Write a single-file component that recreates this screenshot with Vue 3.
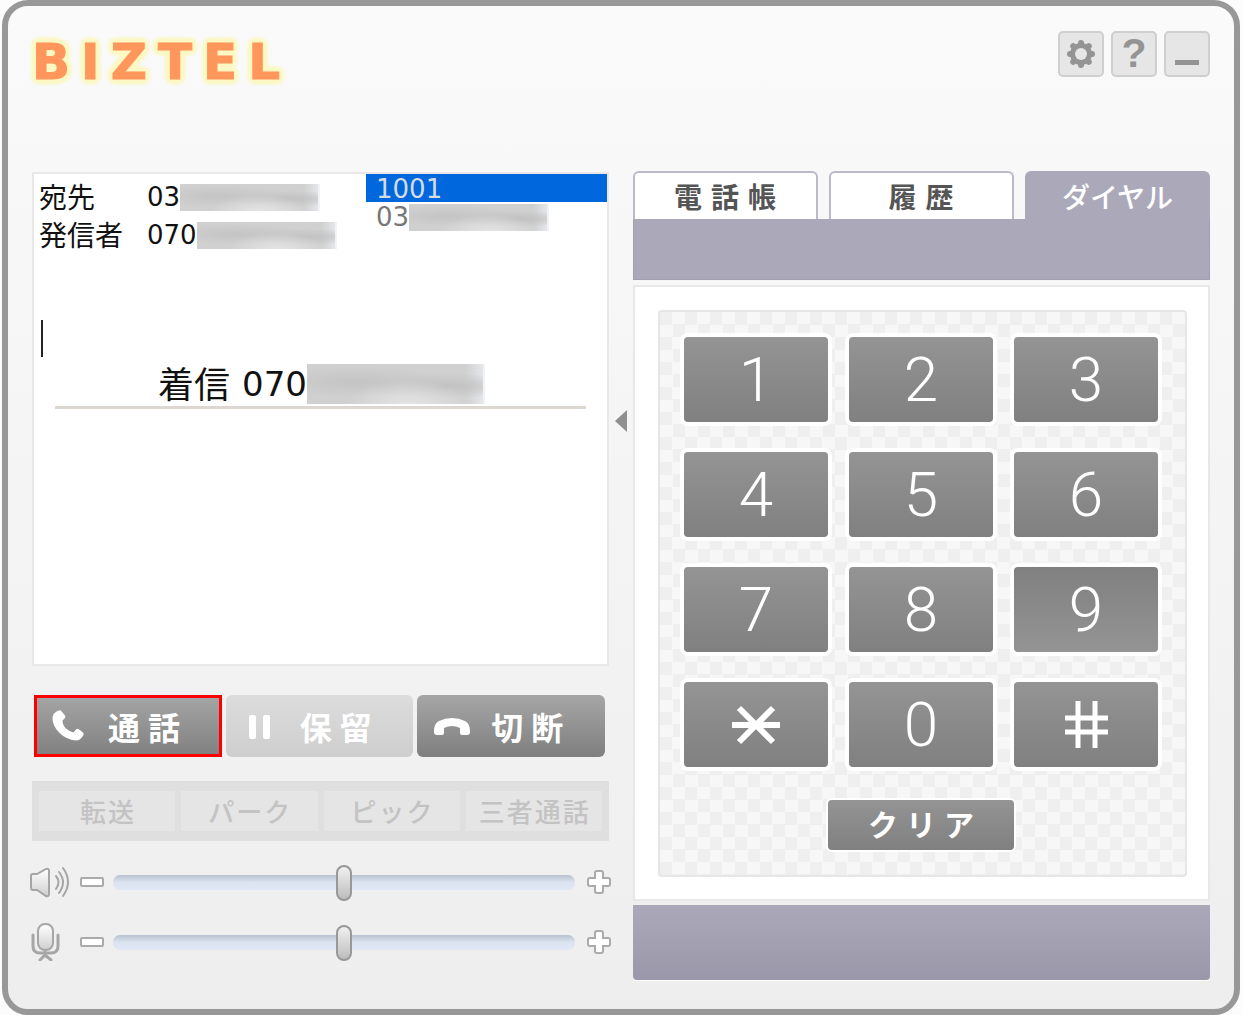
<script setup>
import { ref } from 'vue'

const tabs = [
  { id: 'book', label: '電話帳' },
  { id: 'history', label: '履歴' },
  { id: 'dial', label: 'ダイヤル' }
]
const activeTab = ref('dial')
const keys = ['1', '2', '3', '4', '5', '6', '7', '8', '9', '*', '0', '#']
const pressed = ref('9')
const tools = ['転送', 'パーク', 'ピック', '三者通話']
const entry = ref('')
const speaker = ref(50)
const mic = ref(50)
</script>

<template>
  <div class="phone">
    <header class="top">
      <h1 class="logo">BIZTEL</h1>
      <div class="window-buttons">
        <button type="button" aria-label="設定">
          <svg width="30" height="30" viewBox="0 0 30 30">
            <g fill="#949494">
              <rect v-for="a in [0, 45, 90, 135]" :key="a" x="12" y="1" width="6" height="28" rx="3" :transform="`rotate(${a} 15 15)`" />
              <circle cx="15" cy="15" r="11" />
            </g>
            <circle cx="15" cy="15" r="6" fill="#e6e6e6" />
          </svg>
        </button>
        <button type="button" class="help">?</button>
        <button type="button" aria-label="最小化">
          <svg width="30" height="30" viewBox="0 0 30 30"><rect x="3" y="21" width="24" height="5" fill="#949494" /></svg>
        </button>
      </div>
    </header>

    <main class="columns">
      <section class="left">
        <div class="display">
          <div class="call-info">
            <dl>
              <dt>宛先</dt>
              <dd>03<span class="masked"></span></dd>
              <dt>発信者</dt>
              <dd>070<span class="masked"></span></dd>
            </dl>
            <ul>
              <li class="selected">1001</li>
              <li>03<span class="masked"></span></li>
            </ul>
          </div>
          <div class="entry">
            <span class="caret"></span>
            <input v-model="entry" type="text" aria-label="番号入力" />
          </div>
          <div class="status">
            <span class="state">着信</span>
            <span>070</span><span class="masked large"></span>
          </div>
        </div>

        <div class="actions">
          <button type="button" class="action highlighted">
            <svg width="38" height="36" viewBox="0 0 38 36">
              <path d="M6.500 3.500 L9 2.500 Q10.500 2 11.500 3.200 L15 7.500 Q15.800 8.800 15 10 L12.500 12.500 Q12.500 17 16 20.500 Q19.500 23.500 23.500 24.500 L26 21.500 Q27 20.500 28.500 21 L33 24.500 Q34.200 25.800 33.400 27.300 L31 30.500 Q29 32.500 26 32.500 Q16.500 31.800 9.500 25 Q2 17.500 2.500 9 Q3.500 5 6.500 3.500 Z" fill="#fff" />
            </svg>
            <span>通話</span>
          </button>
          <button type="button" class="action" disabled>
            <svg width="38" height="36" viewBox="0 0 38 36" fill="#fff">
              <rect x="7" y="7" width="7" height="24" rx="2" />
              <rect x="21" y="7" width="7" height="24" rx="2" />
            </svg>
            <span>保留</span>
          </button>
          <button type="button" class="action">
            <svg width="38" height="36" viewBox="0 0 38 36">
              <path d="M1 24 Q0.500 16 6 13 Q12 10 19 10 Q26 10 32 13 Q37.500 16 37 24 Q37 27 34 27 L29 27 Q27 27 27 25 L27 20 Q23 18 19 18 Q15 18 11 20 L11 25 Q11 27 9 27 L4 27 Q1 27 1 24 Z" fill="#fff" />
            </svg>
            <span>切断</span>
          </button>
        </div>

        <div class="tools">
          <button v-for="t in tools" :key="t" type="button" disabled>{{ t }}</button>
        </div>

        <div class="sliders">
          <div class="slider">
            <svg width="42" height="36" viewBox="0 0 42 36" fill="none" stroke="#a6a6a6" stroke-width="2" stroke-linecap="round">
              <defs>
                <linearGradient id="metal" x1="0" y1="0" x2="0" y2="1">
                  <stop offset="0" stop-color="#fff" />
                  <stop offset="1" stop-color="#cfcfcf" />
                </linearGradient>
              </defs>
              <path d="M3 10 Q1 10 1 12 L1 24 Q1 26 3 26 L7 26 L16 32 Q19 33 19 30 L19 7 Q19 4 16 5 L7 10 Z" fill="url(#metal)" />
              <path d="M26 12 Q31 18 26 25 M29 8 Q37 18 29 29 M33 4 Q43 18 33 32" />
            </svg>
            <button type="button" aria-label="音量を下げる">
              <svg width="24" height="24" viewBox="0 0 24 24"><rect x="1" y="8" width="22" height="8" rx="1" fill="#fff" stroke="#aaa" stroke-width="2" /></svg>
            </button>
            <input v-model="speaker" type="range" min="0" max="100" aria-label="スピーカー音量" />
            <button type="button" class="plus" aria-label="音量を上げる">
              <svg width="24" height="24" viewBox="0 0 24 24"><path d="M10 1 H14 Q16 1 16 3 V8 H21 Q23 8 23 10 V14 Q23 16 21 16 H16 V21 Q16 23 14 23 H10 Q8 23 8 21 V16 H3 Q1 16 1 14 V10 Q1 8 3 8 H8 V3 Q8 1 10 1 Z" fill="#fff" stroke="#aaa" stroke-width="2" /></svg>
            </button>
          </div>
          <div class="slider">
            <svg width="42" height="38" viewBox="0 0 42 38" fill="none" stroke="#a6a6a6" stroke-width="2" stroke-linecap="round">
              <path d="M3 12 V23 Q3 30 10 30 H21 Q28 30 28 23 V12" stroke-width="3" />
              <rect x="8" y="1" width="15" height="26" rx="7" fill="url(#metal)" />
              <path d="M15 29 V33 M10 37 L15 32 L21 37" stroke-width="3" />
            </svg>
            <button type="button" aria-label="マイクを下げる">
              <svg width="24" height="24" viewBox="0 0 24 24"><rect x="1" y="8" width="22" height="8" rx="1" fill="#fff" stroke="#aaa" stroke-width="2" /></svg>
            </button>
            <input v-model="mic" type="range" min="0" max="100" aria-label="マイク音量" />
            <button type="button" class="plus" aria-label="マイクを上げる">
              <svg width="24" height="24" viewBox="0 0 24 24"><path d="M10 1 H14 Q16 1 16 3 V8 H21 Q23 8 23 10 V14 Q23 16 21 16 H16 V21 Q16 23 14 23 H10 Q8 23 8 21 V16 H3 Q1 16 1 14 V10 Q1 8 3 8 H8 V3 Q8 1 10 1 Z" fill="#fff" stroke="#aaa" stroke-width="2" /></svg>
            </button>
          </div>
        </div>
      </section>

      <div class="divider">
        <button type="button" aria-label="パネルを閉じる">
          <svg width="14" height="24" viewBox="0 0 14 24"><path d="M1 12 L13 1 V23 Z" fill="#8f8f8f" /></svg>
        </button>
      </div>

      <section class="right">
        <nav class="tabs">
          <button
            v-for="t in tabs"
            :key="t.id"
            type="button"
            :class="{ active: activeTab === t.id, spaced: t.id !== 'dial' }"
            @click="activeTab = t.id"
          >{{ t.label }}</button>
        </nav>
        <div class="band"></div>
        <div class="pad-frame">
          <div class="pad">
            <div class="keys">
              <button v-for="k in keys" :key="k" type="button" :class="{ pressed: pressed === k }" :aria-label="k" @click="pressed = k">
                <svg v-if="k === '*'" width="48" height="48" viewBox="0 0 48 48" stroke="#fff" stroke-width="6">
                  <path d="M0 24 H48 M7 7 L41 41 M41 7 L7 41" />
                </svg>
                <svg v-else-if="k === '#'" width="48" height="48" viewBox="0 0 48 48" stroke="#fff" stroke-width="5">
                  <path d="M3 17 H46 M3 31 H46 M16 0 V47 M33 0 V47" />
                </svg>
                <template v-else>{{ k }}</template>
              </button>
            </div>
            <button type="button" class="clear">クリア</button>
          </div>
        </div>
        <div class="footer-band"></div>
      </section>
    </main>
  </div>
</template>

<style>
body {
  background: #fcfcfc;
}
</style>

<style scoped>
.phone,
.phone * {
  box-sizing: border-box;
}

.phone {
  min-height: 100vh;
  margin: 0 2px;
  padding: 0 24px 29px;
  border: 6px solid #989898;
  border-radius: 26px;
  background: linear-gradient(#fafafa, #eeeeee);
  font-family: "DejaVu Sans", "Noto Sans CJK JP", sans-serif;
  color: #111;
}

button {
  display: flex;
  align-items: center;
  justify-content: center;
  margin: 0;
  padding: 0;
  border: 0;
  background: none;
  font-family: "Noto Sans CJK JP", sans-serif;
}

svg {
  display: block;
  flex: none;
}

.top {
  display: flex;
  justify-content: space-between;
  align-items: flex-start;
  height: 165px;
  padding-top: 25px;
}

.logo {
  margin: 3px 0 0;
  font-size: 50px;
  line-height: 56px;
  font-weight: 700;
  letter-spacing: 11px;
  color: #ff965c;
  -webkit-text-stroke: 1px #ff965c;
  text-shadow:
    5px 0 3px #fbf8c4, -5px 0 3px #fbf8c4, 0 5px 3px #fbf8c4, 0 -5px 3px #fbf8c4,
    4px 4px 3px #fbf8c4, -4px -4px 3px #fbf8c4, 4px -4px 3px #fbf8c4, -4px 4px 3px #fbf8c4;
}

.window-buttons {
  display: flex;
  gap: 7px;
}

.window-buttons button {
  width: 46px;
  height: 46px;
  border: 2px solid #cfcfcf;
  border-radius: 5px;
  background: #e6e6e6;
}

.window-buttons .help {
  padding-bottom: 2px;
  font-family: "Liberation Sans", sans-serif;
  font-size: 41px;
  line-height: 40px;
  font-weight: 700;
  color: #949494;
}

.columns {
  display: grid;
  grid-template-columns: 1fr 24px 1fr;
}

.left {
  min-width: 0;
  padding-top: 1px;
}

.display {
  height: 494px;
  border: 2px solid #e8e8e8;
  background: #fff;
}

.call-info {
  display: flex;
  justify-content: space-between;
  height: 146px;
}

dl {
  display: grid;
  grid-template-columns: 108px 1fr;
  grid-auto-rows: 38px;
  align-items: center;
  margin: 0;
  padding: 4px 0 0 5px;
}

dt {
  padding-bottom: 2px;
  font-family: "Noto Sans CJK JP", sans-serif;
  font-size: 28px;
  line-height: 36px;
}

dd {
  display: flex;
  align-items: center;
  margin: 0;
  font-size: 26px;
  line-height: 38px;
}

.masked {
  width: 140px;
  height: 27px;
  border-right: 2px solid #f0f2f4;
  background:
    radial-gradient(ellipse at 58% 110%, #e6e6e6, transparent 45%),
    radial-gradient(ellipse at 28% 45%, #c4c4c4, transparent 50%),
    radial-gradient(ellipse at 80% 55%, #c2c2c2, transparent 40%),
    linear-gradient(90deg, #d0d0d0, #d0d0d0 90%, #e4e6ea);
}

.masked.large {
  width: 178px;
  height: 40px;
}

ul {
  width: 241px;
  margin: 0;
  padding: 0;
  list-style: none;
}

li {
  display: flex;
  align-items: center;
  height: 28px;
  padding: 2px 0 0 10px;
  font-size: 26px;
  line-height: 26px;
  color: #777;
}

li.selected {
  background: #0068dc;
  color: #d6dce4;
}

.entry {
  display: flex;
  height: 37px;
  padding-left: 7px;
}

.caret {
  width: 2px;
  background: #222;
}

.entry input {
  flex: 1;
  min-width: 0;
  padding: 0;
  border: 0;
  outline: 0;
  background: none;
  font-size: 28px;
}

.status {
  display: flex;
  align-items: center;
  margin: 7px 21px 0;
  height: 45px;
  padding: 0 0 2px 103px;
  border-bottom: 3px solid #dcd8d1;
  font-size: 34px;
  line-height: 40px;
}

.state {
  margin-right: 12px;
  padding-bottom: 4px;
  font-family: "Noto Sans CJK JP", sans-serif;
  font-size: 36px;
}

.actions {
  display: grid;
  grid-template-columns: repeat(3, 1fr);
  gap: 4px;
  margin-top: 29px;
  padding: 0 4px 0 2px;
}

.action {
  justify-content: flex-start;
  gap: 20px;
  height: 62px;
  padding-left: 16px;
  border-radius: 6px;
  background: linear-gradient(#a6a6a6, #7f7f7f);
  font-size: 32px;
  line-height: 40px;
  font-weight: 700;
  letter-spacing: 8px;
  color: #fff;
}

.action:disabled {
  background: linear-gradient(#dcdcdc, #cecece);
}

.action.highlighted {
  border-radius: 0;
  outline: 3px solid #f00;
  outline-offset: -3px;
}

.tools {
  display: grid;
  grid-template-columns: repeat(4, 1fr);
  gap: 6px;
  margin-top: 24px;
  padding: 10px 7px;
  background: #dfdfdf;
}

.tools button {
  height: 40px;
  padding-left: 2px;
  background: #e5e5e5;
  font-size: 26px;
  line-height: 40px;
  font-weight: 500;
  letter-spacing: 2px;
  color: #c3c3c3;
}

.sliders {
  display: grid;
  gap: 24px;
  margin: 23px -2px 0;
}

.slider {
  display: flex;
  align-items: center;
  height: 36px;
}

.slider button {
  margin: 0 9px 0 8px;
}

.slider .plus {
  margin: 0 0 0 12px;
}

.slider input {
  flex: 1;
  min-width: 0;
  height: 36px;
  margin: 0;
  appearance: none;
  background: none;
}

.slider input::-webkit-slider-runnable-track {
  height: 15px;
  border-radius: 7px;
  background: linear-gradient(#b8c2ce, #dce4f2 50%, #e0e7f5);
}

.slider input::-webkit-slider-thumb {
  appearance: none;
  width: 16px;
  height: 36px;
  margin-top: -10px;
  border: 2px solid #989898;
  border-radius: 8px;
  background: linear-gradient(#f0f0f0, #bdbdbd);
}

.divider button {
  margin: 238px 0 0 5px;
}

.right {
  min-width: 0;
}

.tabs {
  display: grid;
  grid-template-columns: repeat(3, 1fr);
  gap: 11px;
}

.tabs button {
  height: 48px;
  border: 2px solid #bbb9ca;
  border-bottom: 0;
  border-radius: 6px 6px 0 0;
  background: #fff;
  font-size: 28px;
  line-height: 40px;
  font-weight: 700;
  color: #555;
}

.tabs .spaced {
  padding-left: 8px;
  letter-spacing: 9px;
}

.tabs .active {
  border-color: #aba9b9;
  background: #aba9b9;
  font-weight: 500;
  color: #fff;
}

.band {
  height: 61px;
  background: #aba9b9;
  border: 1px solid #a19fb2;
  border-top-color: #aba9b9;
}

.pad-frame {
  margin: 5px 0 4px;
  padding: 23px 21px 22px 23px;
  border: 2px solid #e8e8e8;
  background: #fff;
}

.pad {
  padding: 25px 27px 25px 24px;
  border: 2px solid #e6e6e6;
  border-radius: 4px;
  background: repeating-conic-gradient(#f7f7f7 0 25%, #efefef 0 50%) 0 0 / 25px 25px;
}

.keys {
  display: grid;
  grid-template-columns: repeat(3, 1fr);
  gap: 30px 21px;
}

.keys button {
  height: 85px;
  border-radius: 4px;
  background: linear-gradient(#949494, #808080);
  box-shadow: 0 0 0 4px #fff;
  font-family: Roboto, sans-serif;
  font-size: 62px;
  line-height: 84px;
  font-weight: 300;
  color: #fff;
}

.keys .pressed {
  background: linear-gradient(#808080, #949494);
}

.clear {
  width: 186px;
  height: 50px;
  margin: 33px auto 0;
  padding: 0 0 4px 8px;
  border-radius: 4px;
  background: linear-gradient(#949494, #808080);
  box-shadow: 0 0 0 2px #fff;
  font-size: 30px;
  line-height: 40px;
  font-weight: 700;
  letter-spacing: 8px;
  color: #fff;
}

.footer-band {
  height: 75px;
  border-radius: 0 0 4px 4px;
  background: linear-gradient(#aba9b9, #9997a9);
  box-shadow: 0 1px 0 #fff;
}
</style>
